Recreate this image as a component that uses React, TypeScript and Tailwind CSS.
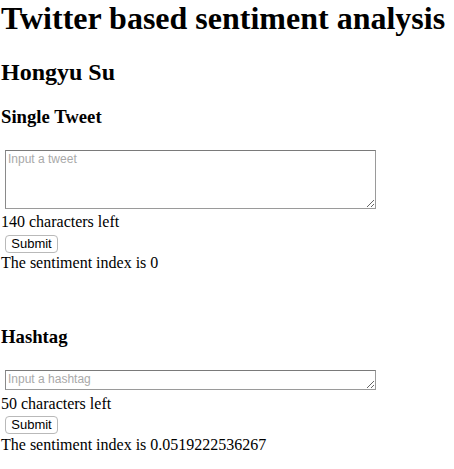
import React, { useState } from 'react';

const serif = "font-['Liberation_Serif','Times_New_Roman',serif]";

const SubmitButton: React.FC = () => (
  <button
    type="button"
    className="block ml-[4px] h-[18px] w-[53px] rounded-[4px] border border-[#b9b9b9] bg-white text-[13px] leading-[16px] text-black font-['Liberation_Sans',Arial,sans-serif]"
  >
    Submit
  </button>
);

interface SectionProps {
  title: string;
  placeholder: string;
  limit: number;
  height: string;
  gapBefore: string;
  result: string;
}

const Section: React.FC<SectionProps> = ({ title, placeholder, limit, height, gapBefore, result }) => {
  const [text, setText] = useState('');

  return (
    <div>
      <h3 className={`${gapBefore} text-[18.72px] leading-[22px] font-bold`}>{title}</h3>
      <textarea
        value={text}
        onChange={(e) => setText(e.target.value.slice(0, limit))}
        placeholder={placeholder}
        className={`block mt-[22px] ml-[4px] w-[371px] ${height} border border-[#9a9a9a] border-t-[#7a7a7a] border-l-[#8a8a8a] bg-white px-[2px] py-[1px] text-[12px] leading-[15px] font-['Liberation_Sans',Arial,sans-serif] placeholder:text-[#a9a9a9] outline-none`}
      />
      <div className="mt-[4.5px] text-[16px] leading-[18px]">{limit - text.length} characters left</div>
      <div className="mt-[3.5px]">
        <SubmitButton />
      </div>
      <div className="mt-[1.5px] text-[16px] leading-[18px]">The sentiment index is {result}</div>
    </div>
  );
};

export default function App() {
  return (
    <div className={`${serif} bg-white text-black w-[454px] h-[469px] overflow-hidden pl-[1px]`}>
      <h1 className="text-[32px] leading-[37px] font-bold whitespace-nowrap">Twitter based sentiment analysis</h1>
      <h2 className="mt-[21px] text-[24px] leading-[28px] font-bold">Hongyu Su</h2>
      <Section
        title="Single Tweet"
        placeholder="Input a tweet"
        limit={140}
        height="h-[59px]"
        gapBefore="mt-[19.5px]"
        result="0"
      />
      <Section
        title="Hashtag"
        placeholder="Input a hashtag"
        limit={50}
        height="h-[20px]"
        gapBefore="mt-[54px]"
        result="0.0519222536267"
      />
    </div>
  );
}
